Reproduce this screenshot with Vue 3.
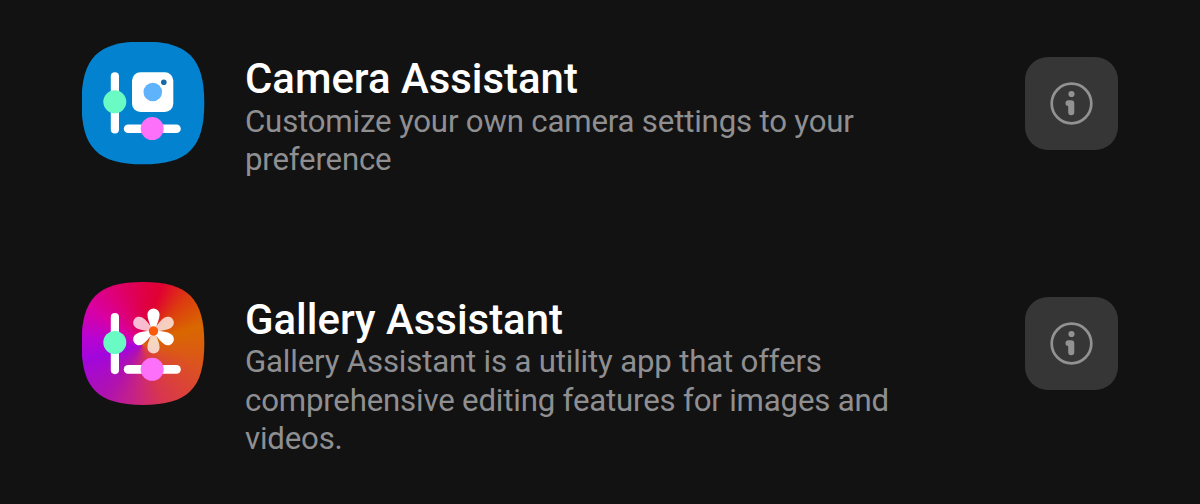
<script setup>
const apps = [
	{
		id: "camera",
		title: "Camera Assistant",
		text: "Customize your own camera settings to your preference",
	},
	{
		id: "gallery",
		title: "Gallery Assistant",
		text: "Gallery Assistant is a utility app that offers comprehensive editing features for images and videos.",
	},
];

// every other petal is translucent
const petals = [60, 180, 300, 0, 120, 240];
</script>

<template>
	<main class="list">
		<article v-for="app in apps" :key="app.id" class="app">
			<div class="app-icon" :class="app.id">
				<svg viewBox="0 0 123 123" width="123" height="123">
					<g v-if="app.id === 'camera'">
						<rect x="50" y="30.3" width="41.3" height="39.6" rx="8.5" fill="#fff" />
						<circle cx="70.8" cy="50" r="9.3" fill="#5fb3fb" />
						<circle cx="81.8" cy="40.2" r="2.8" fill="#1769a8" />
					</g>
					<g v-else transform="translate(71.5 49)">
						<path
							v-for="angle in petals"
							:key="angle"
							d="M-2.3-3.2C-4-8.2-6.1-12.4-6.1-16.5a6.1 6.1 0 0 1 12.2 0C6.1-12.4 4-8.2 2.3-3.2Z"
							:transform="`rotate(${angle})`"
							fill="#fff"
							:fill-opacity="angle % 120 ? 0.74 : 1"
						/>
						<circle r="4.7" fill="#fa5a0c" />
					</g>
					<g :transform="app.id === 'gallery' ? 'translate(0 0.7)' : null">
						<rect x="28.8" y="30.2" width="8.2" height="61.3" rx="4.1" fill="#fff" />
						<rect x="41.8" y="82.4" width="57" height="8.6" rx="4.3" fill="#fff" />
						<circle cx="32.8" cy="59.8" r="11.5" fill="#69fbc3" />
						<circle cx="70.2" cy="86.6" r="11.5" fill="#fd70f9" />
					</g>
				</svg>
			</div>

			<div class="info">
				<h2>{{ app.title }}</h2>
				<p>{{ app.text }}</p>
			</div>

			<button class="more" type="button" :aria-label="`About ${app.title}`">
				<svg viewBox="0 0 93 93" width="93" height="93">
					<circle cx="46.5" cy="46.5" r="19.8" fill="none" stroke="#929294" stroke-width="2.7" />
					<circle cx="46.5" cy="37" r="3.1" fill="#929294" />
					<path
						d="M43.5 43.3H46.4a2.9 2.9 0 0 1 2.9 2.9v9a3.05 3.05 0 0 1-6.1 0V49a2.85 2.85 0 0 1 .3-5.7Z"
						fill="#929294"
					/>
				</svg>
			</button>
		</article>
	</main>
</template>

<style>
body {
	margin: 0;
	background: #121212;
}
</style>

<style scoped>
.list {
	box-sizing: border-box;
	height: 504px;
	padding: 41.5px 82px 0 81.5px;
	overflow: hidden;
	background: #121212;
	font-family: Roboto, "Liberation Sans", sans-serif;
}

.app {
	display: flex;
	align-items: flex-start;
	height: 240.6px;
}

.app-icon {
	flex: none;
	width: 123px;
	height: 123px;
	clip-path: path("M0 61.4C0 16.5 16.5 0 61.4 0S122.8 16.5 122.8 61.4 106.3 122.8 61.4 122.8 0 106.3 0 61.4Z");
}

.app-icon svg,
.more svg {
	display: block;
}

.camera {
	background: #0383cf;
}

.gallery {
	background: conic-gradient(
		from 0deg at 49% 51%,
		#df0048 0deg,
		#e10032 18deg,
		#dc3a10 42deg,
		#d96800 72deg,
		#db5a14 100deg,
		#dc4632 130deg,
		#d8364e 160deg,
		#c82480 186deg,
		#b012ae 215deg,
		#a206dc 255deg,
		#b804d2 278deg,
		#d800a4 305deg,
		#df0070 335deg,
		#df0048 360deg
	);
}

.info {
	width: 670px;
	margin: 13.5px 0 0 40.5px;
}

.info h2 {
	margin: 0;
	color: #fff;
	font-size: 41.9px;
	font-weight: 500;
	line-height: 48px;
}

.info p {
	margin: -0.2px 0 0;
	color: #8f8f92;
	font-size: 31.2px;
	letter-spacing: -0.18px;
	line-height: 38.4px;
}

.more {
	flex: none;
	width: 93px;
	height: 93px;
	margin: 15px 0 0 auto;
	padding: 0;
	border: 0;
	border-radius: 23px;
	background: #363636;
}
</style>
